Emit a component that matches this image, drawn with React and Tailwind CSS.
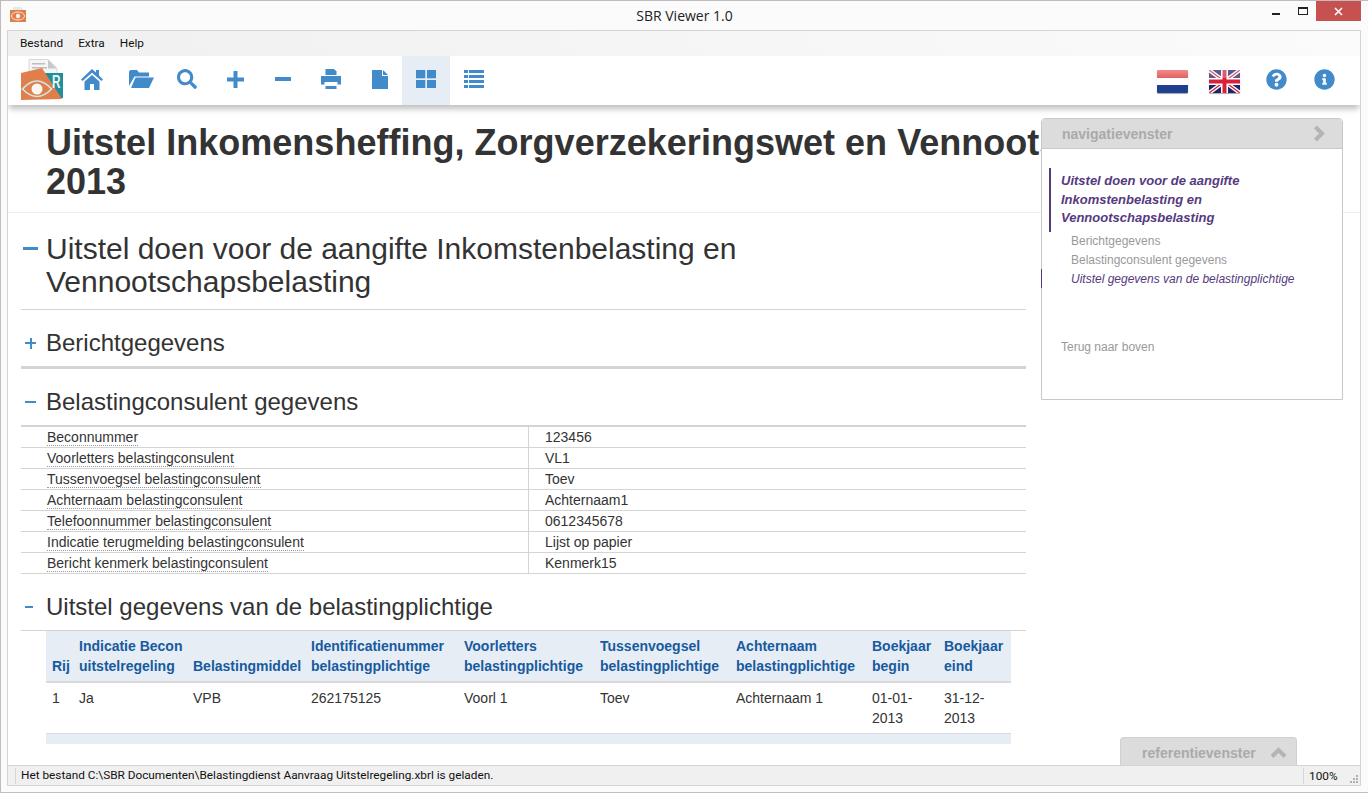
import { FaSearch, FaQuestionCircle, FaInfoCircle } from "react-icons/fa";

const arial = "font-['Liberation_Sans',Arial,sans-serif]";

const consultantRows = [
  ["Beconnummer", "123456"],
  ["Voorletters belastingconsulent", "VL1"],
  ["Tussenvoegsel belastingconsulent", "Toev"],
  ["Achternaam belastingconsulent", "Achternaam1"],
  ["Telefoonnummer belastingconsulent", "0612345678"],
  ["Indicatie terugmelding belastingconsulent", "Lijst op papier"],
  ["Bericht kenmerk belastingconsulent", "Kenmerk15"],
];

const columns = [
  { width: "w-[27px]", head: ["Rij"], value: "1" },
  { width: "w-[114px]", head: ["Indicatie Becon", "uitstelregeling"], value: "Ja" },
  { width: "w-[118px]", head: ["Belastingmiddel"], value: "VPB" },
  { width: "w-[153px]", head: ["Identificatienummer", "belastingplichtige"], value: "262175125" },
  { width: "w-[136px]", head: ["Voorletters", "belastingplichtige"], value: "Voorl 1" },
  { width: "w-[136px]", head: ["Tussenvoegsel", "belastingplichtige"], value: "Toev" },
  { width: "w-[136px]", head: ["Achternaam", "belastingplichtige"], value: "Achternaam 1" },
  { width: "w-[72px]", head: ["Boekjaar", "begin"], value: ["01-01-", "2013"] },
  { width: "w-[73px]", head: ["Boekjaar", "eind"], value: ["31-12-", "2013"] },
];

function AppIcon() {
  return (
    <svg width="16" height="16" viewBox="0 0 16 16">
      <path d="M3 0h8l2 2v3H3z" fill="#e8e8e8" />
      <rect y="3" width="16" height="12" fill="#e07f4b" />
      <ellipse cx="8" cy="9" rx="6.5" ry="4" fill="none" stroke="#f4e6dc" strokeWidth="1" />
      <circle cx="8" cy="9" r="2.2" fill="#f7efe9" />
    </svg>
  );
}

function Logo() {
  return (
    <svg width="44" height="44" viewBox="0 0 44 44">
      <path d="M8 0.5h19l9 9V16H8z" fill="#f5f5f5" stroke="#d8d8d8" strokeWidth="1" />
      <path d="M27 0.5l9 9h-9z" fill="#c9c9c9" />
      <rect x="11" y="4" width="13" height="1.5" fill="#bdbdbd" />
      <rect x="11" y="8" width="15" height="1.5" fill="#bdbdbd" />
      <rect x="21" y="14" width="21" height="25" fill="#1f8f9c" />
      <path d="M0 14 L21 9 L41 40 L0 41z" fill="#e07f4b" />
      <text x="31" y="29" fontSize="18" fontWeight="700" fill="#eaf6f6" fontFamily="Liberation Sans, sans-serif" textLength="8.5" lengthAdjust="spacingAndGlyphs">R</text>
      <path d="M1.5 30 Q16 14 30.5 30 Q16 45 1.5 30z" fill="none" stroke="#cfe6e2" strokeWidth="1.7" />
      <circle cx="16" cy="30" r="5.5" fill="#f9f5f0" />
    </svg>
  );
}

function FlagNl() {
  return (
    <div className="flex h-[23px] w-[31px] flex-col overflow-hidden rounded-[1px] shadow-[0_1px_1px_rgba(0,0,0,0.35)]">
      <div className="h-[8px] bg-gradient-to-b from-[#f08a8a] to-[#e4605f]" />
      <div className="h-[7px] bg-white" />
      <div className="h-[8px] bg-[#1f3f8f]" />
    </div>
  );
}

function FlagUk() {
  return (
    <svg width="31" height="23" viewBox="0 0 31 23" className="rounded-[1px] shadow-[0_1px_1px_rgba(0,0,0,0.35)]">
      <rect width="31" height="23" fill="#20256b" />
      <path d="M0 0L31 23M31 0L0 23" stroke="#ffffff" strokeWidth="4" />
      <path d="M0 0L31 23M31 0L0 23" stroke="#d9223a" strokeWidth="1.4" />
      <path d="M15.5 0V23M0 11.5H31" stroke="#ffffff" strokeWidth="7" />
      <path d="M15.5 0V23M0 11.5H31" stroke="#d9223a" strokeWidth="4" />
      <rect width="31" height="8" fill="#ffffff" opacity="0.25" />
    </svg>
  );
}

function ToolButton({ active, children }) {
  return (
    <div className={`flex h-[49px] w-[48px] items-center justify-center pb-[3px] text-[#428bca] ${active ? "bg-[#e6edf4]" : ""}`}>
      {children}
    </div>
  );
}

function Sign({ w, h = 2, left }) {
  return (
    <div className="w-[25px] shrink-0">
      <div style={{ width: w, height: h, marginLeft: left }} className="bg-[#428bca]" />
    </div>
  );
}

export default function App() {
  return (
    <div className={`relative flex h-[793px] w-[1368px] flex-col overflow-hidden border border-r-0 border-[#bdbdbd] bg-[#fbfbfb] ${arial}`}>
      {/* titel */}
      <div className="relative flex h-[29px] shrink-0 items-center justify-center">
        <div className="absolute left-[9px] top-[6px]">
          <AppIcon />
        </div>
        <span className="text-[14px] leading-[29px] text-[#222] font-['Open_Sans',sans-serif]">SBR Viewer 1.0</span>
        <div className="absolute right-[7px] top-0 flex items-start">
          <div className="mr-[18px] mt-[12px] h-[2px] w-[8px] bg-[#222]" />
          <div className="mr-[8px] mt-[6px] h-[8px] w-[10px] border border-t-2 border-[#222]" />
          <div className="flex h-[20px] w-[45px] items-center justify-center bg-[#c75050] text-white">
            <svg width="9" height="9" viewBox="0 0 9 9">
              <path d="M1 1L8 8M8 1L1 8" stroke="#fff" strokeWidth="1.6" />
            </svg>
          </div>
        </div>
      </div>

      <div className="ml-[6px] mr-[7px] flex min-h-0 flex-1 flex-col overflow-hidden border border-[#d4d4d4] bg-white">
        {/* menu */}
        <div className="flex h-[25px] shrink-0 items-center gap-[15px] bg-gradient-to-r from-[#f0f0f0] to-[#fbfbfb] pl-[12px] pt-[1px] text-[11.8px] text-[#111] font-['Roboto',sans-serif]">
          <span>Bestand</span>
          <span>Extra</span>
          <span>Help</span>
        </div>

        {/* toolbar */}
        <div className="relative z-10 flex h-[49px] shrink-0 items-center bg-white pl-[13px] pr-[25px] shadow-[0_5px_6px_-1px_rgba(0,0,0,0.25)]">
          <div className="mr-[1px] mt-[1px] w-[44px]">
            <Logo />
          </div>
          <ToolButton>
            <svg width="22" height="21" viewBox="0 0 22 21" className="ml-[4px]" fill="currentColor">
              <path d="M11 0L15 3.5V1H18V6.5L22 10.5L20.5 12L11 3.8L1.5 12L0 10.5z" />
              <path d="M3.5 12.5L11 6L18.5 12.5V21H13V15H9V21H3.5z" />
            </svg>
          </ToolButton>
          <ToolButton>
            <svg width="25" height="18" viewBox="0 0 25 18" className="ml-[7px]" fill="currentColor">
              <path d="M0 16V1.5L1.5 0H8L10 2.5H20V6.5H5.5z" />
              <path d="M6.5 7.5H25L20 18H2z" />
            </svg>
          </ToolButton>
          <ToolButton>
            <FaSearch size={20} className="ml-[2px]" />
          </ToolButton>
          <ToolButton>
            <svg width="17" height="17" viewBox="0 0 17 17" className="ml-[3px]" fill="currentColor">
              <rect x="0" y="6.5" width="17" height="4" />
              <rect x="6.5" y="0" width="4" height="17" />
            </svg>
          </ToolButton>
          <ToolButton>
            <svg width="16" height="4" viewBox="0 0 16 4" className="ml-[2px]" fill="currentColor">
              <rect width="16" height="4" />
            </svg>
          </ToolButton>
          <ToolButton>
            <svg width="20" height="20" viewBox="0 0 20 20" className="ml-[2px]" fill="currentColor">
              <path d="M4.5 0H13L15.5 2.5V6H4.5z" />
              <path d="M0 7H20V15.5H16.5V13H3.5V15.5H0z" />
              <rect x="4.5" y="17" width="11" height="3" />
            </svg>
          </ToolButton>
          <ToolButton>
            <svg width="16" height="19" viewBox="0 0 16 19" className="ml-[4px]" fill="currentColor">
              <path d="M0 0H10V6H16V19H0z" />
              <path d="M11 0L16 5H11z" />
            </svg>
          </ToolButton>
          <ToolButton active>
            <svg width="20" height="18" viewBox="0 0 20 18" fill="currentColor">
              <rect width="9.3" height="8.3" />
              <rect x="11" width="9" height="8.3" />
              <rect y="10" width="9.3" height="8" />
              <rect x="11" y="10" width="9" height="8" />
            </svg>
          </ToolButton>
          <ToolButton>
            <svg width="20" height="18" viewBox="0 0 20 18" fill="currentColor">
              {[0, 5, 10, 15].map((y) => (
                <g key={y}>
                  <rect y={y} width="4" height="3" />
                  <rect x="5" y={y} width="15" height="3" />
                </g>
              ))}
            </svg>
          </ToolButton>
          <div className="ml-auto flex items-center">
            <div className="mt-[2px]">
              <FlagNl />
            </div>
            <div className="ml-[21px] mt-[2px]">
              <FlagUk />
            </div>
            <div className="mb-[3px] ml-[26px] text-[#428bca]">
              <FaQuestionCircle size={21} />
            </div>
            <div className="mb-[3px] ml-[27px] text-[#428bca]">
              <FaInfoCircle size={21} />
            </div>
          </div>
        </div>

        {/* inhoud */}
        <div className="relative min-h-0 flex-1 overflow-hidden bg-white text-[#333]">
          <div className="border-b border-[#eeeeee] pb-[11px] pl-[38px] pt-[18px]">
            <h1 className="text-[36px] font-bold leading-[39px] tracking-[0.02px] text-[#333]">
              Uitstel Inkomensheffing, Zorgverzekeringswet en Vennootschapsbelasting 2013
            </h1>
          </div>

          <div className="mx-[13px] w-[1005px]">
            <div className="flex border-b border-[#d4d4d4] pb-[11px] pt-[19px]">
              <div className="mt-[15px]">
                <Sign w={15} h={3} left={2} />
              </div>
              <h2 className="text-[30px] leading-[33px]">
                Uitstel doen voor de aangifte Inkomstenbelasting en
                <br />
                Vennootschapsbelasting
              </h2>
            </div>

            <div className="flex items-center border-b-[3px] border-[#d4d4d4] pb-[10px] pt-[19px]">
              <div className="relative">
                <Sign w={11} left={4} />
                <div className="absolute left-[9px] top-[-4px] h-[11px] w-[2px] bg-[#428bca]" />
              </div>
              <h3 className="text-[24px] leading-[27px]">Berichtgegevens</h3>
            </div>

            <div className="flex items-center border-b-2 border-[#d4d4d4] pb-[10px] pt-[19px]">
              <Sign w={11} left={4} />
              <h3 className="text-[24px] leading-[27px]">Belastingconsulent gegevens</h3>
            </div>

            <div className="text-[14px] leading-[20px]">
              {consultantRows.map(([label, value]) => (
                <div key={label} className="flex h-[21px] border-b border-[#d4d4d4]">
                  <div className="w-[508px] shrink-0 border-r border-[#d4d4d4] pl-[26px]">
                    <span className="border-b border-dotted border-[#999]">{label}</span>
                  </div>
                  <div className="pl-[16px]">{value}</div>
                </div>
              ))}
            </div>

            <div className="flex items-center border-b border-[#d4d4d4] pb-[10px] pt-[19px]">
              <Sign w={8} left={4} />
              <h3 className="text-[24px] leading-[27px]">Uitstel gegevens van de belastingplichtige</h3>
            </div>

            <div className="ml-[25px] w-[965px] text-[14px] leading-[20px]">
              <div className="flex h-[52px] items-end border-b-2 border-[#d9d9d9] bg-[#e6edf4] pb-[5px] font-bold text-[#175a9f]">
                {columns.map((col) => (
                  <div key={col.head[0]} className={`${col.width} shrink-0 pl-[6px]`}>
                    {col.head.map((line) => (
                      <div key={line}>{line}</div>
                    ))}
                  </div>
                ))}
              </div>
              <div className="flex h-[50px] pt-[5px]">
                {columns.map((col) => (
                  <div key={col.head[0]} className={`${col.width} shrink-0 pl-[6px]`}>
                    {[].concat(col.value).map((line) => (
                      <div key={line}>{line}</div>
                    ))}
                  </div>
                ))}
              </div>
              <div className="h-[11px] border-t border-[#d9d9d9] bg-[#e6edf4]" />
            </div>
          </div>

          {/* navigatievenster */}
          <div className="absolute left-[1033px] top-[13px] h-[282px] w-[302px] rounded-t-[4px] border border-[#c8c8c8] bg-white">
            <div className="flex h-[30px] items-center justify-between rounded-t-[4px] border-b border-[#c8c8c8] bg-[#dcdcdc] pl-[20px] pr-[17px] pt-[2px] text-[14px] font-bold text-[#aaaaaa]">
              <span>navigatievenster</span>
              <svg width="12" height="17" viewBox="0 0 12 17" className="mb-[2px]">
                <path d="M2.5 2L9 8.5L2.5 15" fill="none" stroke="#b4b4b4" strokeWidth="4" />
              </svg>
            </div>
            <div className="ml-[7px] mt-[19px] border-l-2 border-[#553a80] py-[4px] pl-[10px] text-[13px] font-bold italic leading-[18.5px] text-[#553a80]">
              Uitstel doen voor de aangifte
              <br />
              Inkomstenbelasting en
              <br />
              Vennootschapsbelasting
            </div>
            <div className="ml-[29px] text-[12px] leading-[19px] text-[#999999]">
              <div>Berichtgegevens</div>
              <div>Belastingconsulent gegevens</div>
              <div className="italic text-[#553a80]">Uitstel gegevens van de belastingplichtige</div>
            </div>
            <div className="ml-[19px] mt-[49px] text-[12px] leading-[19px] text-[#999999]">Terug naar boven</div>
            <div className="absolute left-[-1px] top-[150px] h-[19px] w-[1px] bg-[#553a80]" />
          </div>

          {/* referentievenster */}
          <div className="absolute bottom-0 left-[1112px] flex h-[28px] w-[177px] items-center justify-between rounded-t-[4px] border border-b-0 border-[#d0d0d0] bg-[#dcdcdc] pl-[21px] pr-[9px] pt-[3px] text-[14px] font-bold text-[#aaaaaa]">
            <span>referentievenster</span>
            <svg width="17" height="12" viewBox="0 0 17 12">
              <path d="M2 9.5L8.5 3L15 9.5" fill="none" stroke="#b4b4b4" strokeWidth="4" />
            </svg>
          </div>
        </div>

        {/* status */}
        <div className="relative flex h-[20px] shrink-0 items-center border-t border-[#d4d4d4] bg-[#f0f0f0] text-[11.8px] text-[#111] font-['Roboto',sans-serif]">
          <div className="ml-[7px] h-[16px] w-[1px] bg-[#d4d4d4]" />
          <span className="ml-[5px]">Het bestand C:\SBR Documenten\Belastingdienst Aanvraag Uitstelregeling.xbrl is geladen.</span>
          <div className="ml-auto h-[16px] w-[57px] border-l border-[#d4d4d4] pl-[5px] leading-[16px]">100%</div>
          <svg width="8" height="8" viewBox="0 0 8 8" className="absolute bottom-[2px] right-[2px]" fill="#b0b0b0">
            <rect x="6" y="0" width="2" height="2" />
            <rect x="3" y="3" width="2" height="2" />
            <rect x="6" y="3" width="2" height="2" />
            <rect x="0" y="6" width="2" height="2" />
            <rect x="3" y="6" width="2" height="2" />
            <rect x="6" y="6" width="2" height="2" />
          </svg>
        </div>
      </div>
      <div className="h-[6px] shrink-0" />
    </div>
  );
}
